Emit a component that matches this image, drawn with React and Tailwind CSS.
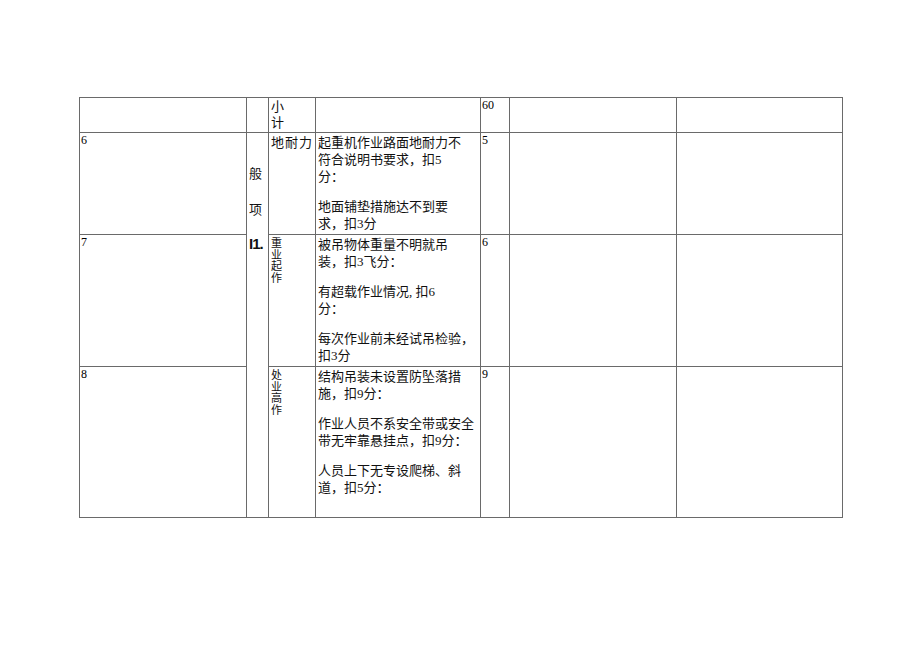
import React from "react";

const cell = "border border-[#6a6a6a] align-top p-0";

const Para = ({ lines, last }) => (
  <div className={last ? "" : "mb-[13px]"}>
    {lines.map((l, i) => (
      <div key={i} className="whitespace-nowrap leading-[17px]">{l}</div>
    ))}
  </div>
);

const Num = ({ children }) => (
  <div className="pl-[1px] pt-[1px] text-[12px] leading-[13px] text-black">{children}</div>
);

const Stack = ({ chars }) => (
  <div className="pl-[2px] pt-[3px] text-[11px]">
    {chars.map((c) => (
      <div key={c} className="leading-[11.5px]">{c}</div>
    ))}
  </div>
);

const rows = [
  {
    no: "6",
    title: <div className="pl-[2px] pt-[1px] leading-[17px] tracking-[1px]">地耐力</div>,
    h: "h-[102px]",
    score: "5",
    paras: [
      ["起重机作业路面地耐力不", "符合说明书要求，扣5", "分："],
      ["地面铺垫措施达不到要", "求，扣3分"],
    ],
  },
  {
    no: "7",
    title: <Stack chars={["重", "业", "起", "作"]} />,
    h: "h-[132px]",
    score: "6",
    paras: [
      ["被吊物体重量不明就吊", "装，扣3飞分："],
      ["有超载作业情况, 扣6", "分："],
      ["每次作业前未经试吊检验，", "扣3分"],
    ],
  },
  {
    no: "8",
    title: <Stack chars={["处", "业", "高", "作"]} />,
    h: "h-[151px]",
    score: "9",
    paras: [
      ["结构吊装未设置防坠落措", "施，扣9分："],
      ["作业人员不系安全带或安全", "带无牢靠悬挂点，扣9分："],
      ["人员上下无专设爬梯、斜", "道，扣5分："],
    ],
  },
];

export default function App() {
  return (
    <div
      className="min-h-[651px] w-[920px] bg-white pl-[79px] pt-[97px] text-[13px] text-[#111]"
      style={{ fontFamily: '"Liberation Serif", "Noto Sans CJK SC", serif' }}
    >
      <table className="w-[763px] table-fixed border-collapse">
        <colgroup>
          <col className="w-[167px]" />
          <col className="w-[22px]" />
          <col className="w-[47px]" />
          <col className="w-[165px]" />
          <col className="w-[29px]" />
          <col className="w-[167px]" />
          <col className="w-[166px]" />
        </colgroup>
        <tbody>
          <tr className="h-[35px]">
            <td className={cell}></td>
            <td className={cell}></td>
            <td className={cell}>
              <div className="pl-[2px] pt-[1px] leading-[16px]">
                <div>小</div>
                <div>计</div>
              </div>
            </td>
            <td className={cell}></td>
            <td className={cell}><Num>60</Num></td>
            <td className={cell}></td>
            <td className={cell}></td>
          </tr>
          {rows.map((r, idx) => (
            <tr key={r.no} className={r.h}>
              <td className={cell}><Num>{r.no}</Num></td>
              {idx === 0 && (
                <td rowSpan={3} className={cell}>
                  <div className="pl-[2px] pt-[32px]">
                    <div className="leading-[17px]">般</div>
                    <div className="mt-[19px] leading-[17px]">项</div>
                    <div
                      className="mt-[17px] text-[15px] font-bold leading-[17px] tracking-[-1px]"
                      style={{ fontFamily: '"Liberation Sans", sans-serif' }}
                    >
                      I1.
                    </div>
                  </div>
                </td>
              )}
              <td className={cell}>{r.title}</td>
              <td className={cell}>
                <div className="pl-[2px] pt-[1px]">
                  {r.paras.map((p, i) => (
                    <Para key={i} lines={p} last={i === r.paras.length - 1} />
                  ))}
                </div>
              </td>
              <td className={cell}><Num>{r.score}</Num></td>
              <td className={cell}></td>
              <td className={cell}></td>
            </tr>
          ))}
        </tbody>
      </table>
    </div>
  );
}
